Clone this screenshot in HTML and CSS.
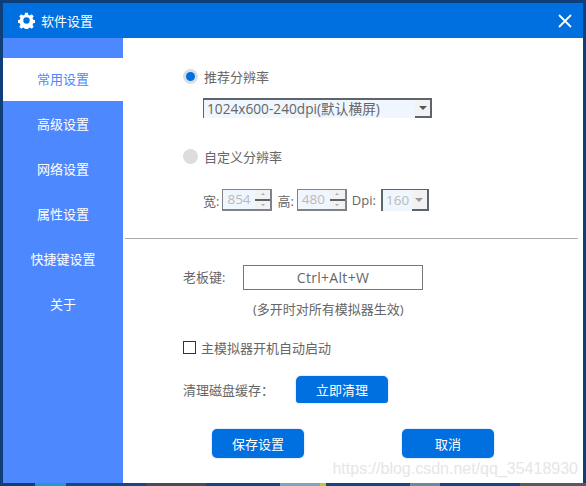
FILE: index.html
```html
<!DOCTYPE html>
<html lang="zh">
<head>
<meta charset="utf-8">
<title>软件设置</title>
<link rel="stylesheet" href="styles.css">
</head>
<body>
<div class="window">
  <header class="titlebar">
    <svg class="gear" viewBox="0 0 24 24" width="17" height="17"><path fill="#fff" fill-rule="evenodd" d="M10 1h4l.6 3 2.2.9 2.6-1.700 2.800 2.800-1.700 2.600.9 2.200 3 .6v4l-3 .6-.9 2.200 1.700 2.600-2.800 2.800-2.600-1.700-2.200.9-.6 3h-4l-.6-3-2.200-.9-2.600 1.700-2.800-2.800 1.700-2.600-.9-2.200-3-.6v-4l3-.6.9-2.200-1.700-2.600 2.800-2.800 2.600 1.700 2.200-.9zM12 7.500a4.500 4.500 0 1 0 0 9 4.500 4.500 0 0 0 0-9z"/></svg>
    <span class="title">软件设置</span>
    <svg class="close" viewBox="0 0 14 14" width="14" height="14"><path d="M1 1l12 12M13 1L1 13" stroke="#fff" stroke-width="1.800" fill="none"/></svg>
  </header>
  <div class="body">
    <nav class="sidebar">
      <a class="nav active">常用设置</a>
      <a class="nav">高级设置</a>
      <a class="nav">网络设置</a>
      <a class="nav">属性设置</a>
      <a class="nav">快捷键设置</a>
      <a class="nav">关于</a>
    </nav>
    <main class="content">
      <section class="resolution">
        <div class="radio-row">
          <span class="radio on"></span><span>推荐分辨率</span>
        </div>
        <div class="select wide">
          <span class="select-text">1024x600-240dpi(默认横屏)</span>
          <span class="select-btn"><i class="arrow"></i></span>
        </div>
        <div class="radio-row custom">
          <span class="radio"></span><span>自定义分辨率</span>
        </div>
        <div class="fields">
          <span>宽:</span>
          <span class="spin"><span class="spin-val">854</span><span class="spin-btns"><i class="up"></i><i class="down"></i></span></span>
          <span>高:</span>
          <span class="spin"><span class="spin-val">480</span><span class="spin-btns"><i class="up"></i><i class="down"></i></span></span>
          <span>Dpi:</span>
          <span class="select small"><span class="select-text muted">160</span><span class="select-btn"><i class="arrow grey"></i></span></span>
        </div>
      </section>
      <hr class="divider">
      <section class="general">
        <div class="boss-row">
          <span class="boss-label">老板键:</span>
          <span class="hotkey">Ctrl+Alt+W</span>
        </div>
        <p class="note">(多开时对所有模拟器生效)</p>
        <label class="check-row"><span class="checkbox"></span><span>主模拟器开机自动启动</span></label>
        <div class="clean-row">
          <span class="clean-label">清理磁盘缓存：</span>
          <button class="btn">立即清理</button>
        </div>
      </section>
      <footer class="actions">
        <button class="btn">保存设置</button>
        <button class="btn">取消</button>
      </footer>
      <span class="watermark">https://blog.csdn.net/qq_35418930</span>
    </main>
  </div>
</div>
</body>
</html>
```

FILE: styles.css
```css
* { box-sizing: border-box; }
html, body { margin: 0; height: 100%; }
body {
  width: 586px;
  height: 486px;
  padding: 3px;
  overflow: hidden;
  font-family: "Open Sans", "Noto Sans CJK SC", sans-serif;
  font-size: 13px;
  color: #666;
  background:
    linear-gradient(90deg, #0f3f78 0 35px, #1d9bd0 35px 66px, #134a85 66px 146px, #4a4a50 146px 206px, #17457e 206px 280px, #7aa6c0 280px 320px, #c9c23c 320px 326px, #17457e 326px 410px, #6d8a9c 410px 440px, #17457e 440px 520px, #565a60 520px 586px) bottom / 100% 3px no-repeat,
    #0f3f78;
}
.window { width: 580px; height: 480px; background: #fff; display: flex; flex-direction: column; }
.titlebar {
  height: 35px; flex: none;
  background: #006fe0; color: #fff;
  display: flex; align-items: center;
  padding: 0 11px 0 15px;
}
.gear { flex: none; margin-top: -1px; }
.title { margin-left: 6px; font-size: 13px; }
.close { margin-left: auto; }
.body { flex: 1; display: flex; min-height: 0; }
.sidebar {
  width: 120px; flex: none;
  background: #4e88ff;
  padding-top: 20px;
  display: flex; flex-direction: column;
}
.nav {
  height: 45px; color: #fff;
  display: flex; align-items: center; justify-content: center;
  padding-bottom: 5px;
}
.nav.active { height: 43px; margin-bottom: 2px; background: #fff; color: #4e88ff; padding-bottom: 2px; }
.content { flex: 1; position: relative; display: flex; flex-direction: column; padding-left: 2px; }
.resolution { padding: 28px 0 0 58px; height: 200px; flex: none; }
.radio-row { display: flex; align-items: center; gap: 6px; height: 20px; }
.radio {
  width: 15px; height: 15px; border-radius: 50%;
  background: #ddd; display: flex; align-items: center; justify-content: center; flex: none;
}
.radio.on::after { content: ""; width: 9px; height: 9px; border-radius: 50%; background: #006fe0; }
.select {
  display: flex; align-items: stretch;
  background: #eff6fd;
  border: 1px solid #5e646c; border-bottom: 0; border-right: 2px solid #5e646c;
  border-top-width: 2px; border-left-width: 1px;
}
.wide { width: 229px; height: 20px; margin: 12px 0 0 20px; color: #666; }
.select-text { flex: 1; padding-left: 3px; line-height: 18px; white-space: nowrap; }
.wide .select-text { font-size: 13.7px; }
.muted { color: #bbb; }
.select-btn {
  width: 15px; background: #f2f2f2; border-bottom: 2px solid #5e646c;
  display: flex; align-items: center; justify-content: center;
}
.arrow { width: 0; height: 0; border: 4px solid transparent; border-top: 4px solid #555; border-bottom: 0; }
.arrow.grey { border-top-color: #999; }
.custom { margin-top: 28px; }
.fields { display: flex; align-items: center; margin: 23px 0 0 20px; height: 22px; }
.spin {
  display: flex; width: 50px; height: 22px; margin: 0 5px 0 3px;
  background: #eff6fd;
  border: 1px solid #7d8388; border-right-width: 2px; border-bottom-width: 2px; color: #bbb;
  font-size: 13.5px;
}
.spin-val { flex: 1; padding-left: 4px; line-height: 19px; }
.spin-btns { width: 15px; display: flex; flex-direction: column; background: #f2f2f2; }
.spin-btns i { flex: 1; display: flex; align-items: center; justify-content: center; }
.spin-btns .up { border-bottom: 2px solid #5e646c; }
.spin-btns i::after { content: ""; width: 0; height: 0; border: 2px solid transparent; }
.spin-btns .up::after { border-bottom-color: #aaa; border-top: 0; }
.spin-btns .down::after { border-top-color: #aaa; border-bottom: 0; }
.small { width: 48px; height: 22px; margin-left: 5px; border-left-width: 2px; border-top-width: 1px; border-bottom: 0; font-size: 13.5px; }
.small .select-text { line-height: 20px; padding-left: 3px; }
.small .select-btn { width: 15px; }
.divider { margin: 0 5px 0 0; border: 0; height: 1px; background: #aaa; flex: none; }
.general { padding: 25px 0 0 58px; flex: none; }
.boss-row { display: flex; align-items: center; height: 26px; }
.boss-label { width: 60px; margin-top: -2px; }
.hotkey {
  width: 180px; height: 25px; border: 1px solid #777;
  display: flex; align-items: center; justify-content: center;
  font-size: 14px; letter-spacing: .3px;
}
.note { margin: 9px 0 0; padding-left: 70px; line-height: 20px; }
.check-row { display: flex; align-items: center; margin-top: 18px; height: 20px; gap: 5px; }
.checkbox { width: 13px; height: 13px; border: 1px solid #333; flex: none; }
.clean-row { display: flex; align-items: flex-start; margin-top: 19px; }
.clean-label { width: 113px; line-height: 28px; }
.btn {
  border: 0; background: #006fe0; color: #fff;
  font: inherit; width: 92px; height: 29px; border-radius: 5px;
  box-shadow: 0 0 2px #9cc4f2;
}
.clean-row .btn { height: 27px; border-radius: 5px 5px 3px 3px; }
.actions { display: flex; gap: 98px; padding: 25px 0 0 87px; }
.watermark {
  position: absolute; right: 5px; bottom: 5px;
  font-family: "Liberation Sans", sans-serif; font-size: 16px; color: #e6e6e6;
  white-space: nowrap;
}
```
